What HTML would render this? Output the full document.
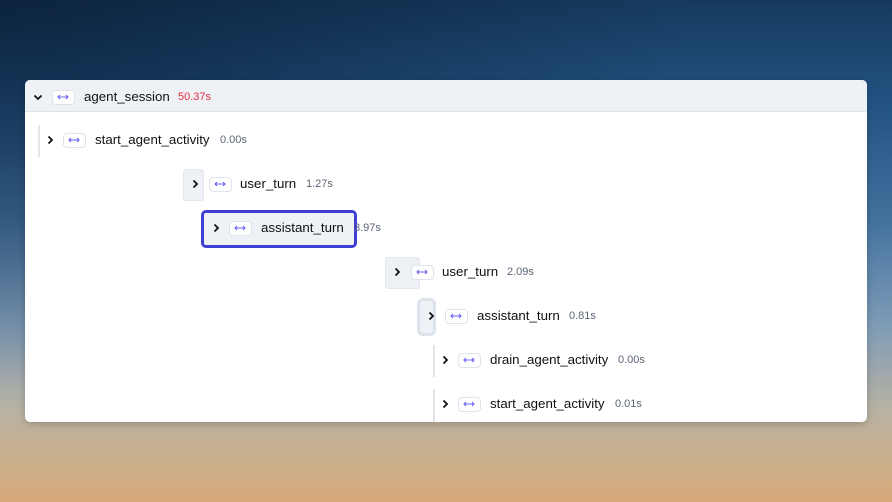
<!DOCTYPE html>
<html><head><style>
*{margin:0;padding:0;box-sizing:border-box}
body{width:892px;height:502px;overflow:hidden;position:relative;font-family:"Liberation Sans",sans-serif;
background:linear-gradient(180deg,#163a5e 0%,#245585 22%,#4674a0 45%,#7f9cb7 65%,#b9b2a2 82%,#d7aa78 100%);}
.bgl{position:absolute;inset:0;background:radial-gradient(ellipse at 0% 0%,rgba(5,20,40,.6),transparent 55%)}
.card{position:absolute;left:25px;top:80px;width:842px;height:342px;background:#fff;border-radius:5px;overflow:hidden;box-shadow:0 2px 8px rgba(0,0,0,.2)}
.hdr{position:absolute;left:0;top:0;width:100%;height:32px;background:#eef1f5;border-bottom:1px solid #dfe3e9}
.e{position:absolute}
.t{position:absolute;font-size:13.3px;color:#111;line-height:16px}
.s{position:absolute;font-size:11px;color:#5a6476;line-height:14px}
.b{position:absolute;width:23px;height:15px;border:1.5px solid #dfe3ea;border-radius:4px;background:#fff}
.b svg{position:absolute;left:4px;top:3px;width:12px;height:6px}
.c{position:absolute;width:8px;height:10px}
.bar{position:absolute;width:2px;background:#e1e4e9}
</style></head><body><div class="bgl"></div>
<div class="card"><div class="hdr"></div></div>
<svg width="0" height="0" style="position:absolute"><defs><symbol id="ar" viewBox="0 0 12 6"><path d="M1 3H11M3 1L1 3L3 5M9 1L11 3L9 5" fill="none" stroke="#6a63f0" stroke-width="1.1"/></symbol></defs></svg>
<div style="position:absolute;left:0;top:1px">
<div class="e" style="left:183px;top:168px;width:21px;height:32px;background:#eef1f5;border-radius:3px;border:1px solid #e3e6ea"></div>
<div class="e" style="left:201px;top:209px;width:156px;height:38px;background:#eef1f5;border:3px solid #3f3fd4;border-radius:5px"></div>
<div class="e" style="left:385px;top:256px;width:35px;height:32px;background:#eef1f5;border-radius:3px;border:1px solid #e3e6ea"></div>
<div class="e" style="left:417px;top:297px;width:19px;height:38px;background:#eef1f5;border:3px solid #dde3ea;border-radius:6px"></div>
<div class="bar" style="left:38px;top:124px;height:32px"></div>
<div class="bar" style="left:433px;top:344px;height:32px"></div>
<div class="bar" style="left:433px;top:388px;height:33px"></div>

<svg class="c" style="left:33px;top:91px;width:10px" viewBox="0 0 10 10"><path d="M1.5 3.5L5 7L8.5 3.5" fill="none" stroke="#111" stroke-width="1.8"/></svg>
<div class="b" style="left:52px;top:89px"><svg><use href="#ar"/></svg></div><div class="t" style="left:84px;top:88px">agent_session</div><div class="s" style="left:178px;top:89px;color:#e0303a">50.37s</div>

<svg class="c" style="left:46px;top:134px" viewBox="0 0 8 10"><path d="M2.5 1.5L6 5L2.5 8.5" fill="none" stroke="#111" stroke-width="1.8"/></svg>
<div class="b" style="left:63px;top:132px"><svg><use href="#ar"/></svg></div><div class="t" style="left:95px;top:131px">start_agent_activity</div><div class="s" style="left:220px;top:132px">0.00s</div>

<svg class="c" style="left:191px;top:178px" viewBox="0 0 8 10"><path d="M2.5 1.5L6 5L2.5 8.5" fill="none" stroke="#111" stroke-width="1.8"/></svg>
<div class="b" style="left:209px;top:176px"><svg><use href="#ar"/></svg></div><div class="t" style="left:240px;top:175px">user_turn</div><div class="s" style="left:306px;top:176px">1.27s</div>

<svg class="c" style="left:212px;top:222px" viewBox="0 0 8 10"><path d="M2.5 1.5L6 5L2.5 8.5" fill="none" stroke="#111" stroke-width="1.8"/></svg>
<div class="b" style="left:229px;top:220px"><svg><use href="#ar"/></svg></div><div class="t" style="left:261px;top:219px">assistant_turn</div><div class="s" style="left:354px;top:220px">3.97s</div>

<svg class="c" style="left:393px;top:266px" viewBox="0 0 8 10"><path d="M2.5 1.5L6 5L2.5 8.5" fill="none" stroke="#111" stroke-width="1.8"/></svg>
<div class="b" style="left:411px;top:264px"><svg><use href="#ar"/></svg></div><div class="t" style="left:442px;top:263px">user_turn</div><div class="s" style="left:507px;top:264px">2.09s</div>

<svg class="c" style="left:427px;top:310px" viewBox="0 0 8 10"><path d="M2.5 1.5L6 5L2.5 8.5" fill="none" stroke="#111" stroke-width="1.8"/></svg>
<div class="b" style="left:445px;top:308px"><svg><use href="#ar"/></svg></div><div class="t" style="left:477px;top:307px">assistant_turn</div><div class="s" style="left:569px;top:308px">0.81s</div>

<svg class="c" style="left:441px;top:354px" viewBox="0 0 8 10"><path d="M2.5 1.5L6 5L2.5 8.5" fill="none" stroke="#111" stroke-width="1.8"/></svg>
<div class="b" style="left:458px;top:352px"><svg><use href="#ar"/></svg></div><div class="t" style="left:490px;top:351px">drain_agent_activity</div><div class="s" style="left:618px;top:352px">0.00s</div>

<svg class="c" style="left:441px;top:398px" viewBox="0 0 8 10"><path d="M2.5 1.5L6 5L2.5 8.5" fill="none" stroke="#111" stroke-width="1.8"/></svg>
<div class="b" style="left:458px;top:396px"><svg><use href="#ar"/></svg></div><div class="t" style="left:490px;top:395px">start_agent_activity</div><div class="s" style="left:615px;top:396px">0.01s</div>
</div>
</body></html>
